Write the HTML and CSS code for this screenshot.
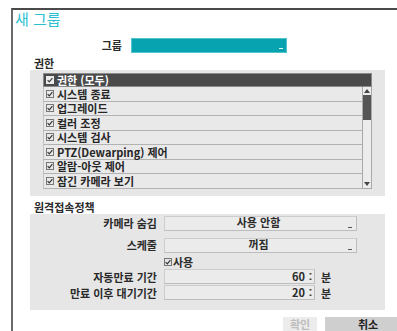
FILE: index.html
```html
<!DOCTYPE html>
<html lang="ko">
<head>
    <meta charset="UTF-8">
    <meta name="viewport" content="width=device-width, initial-scale=1.0">
    <title>새 그룹</title>
    <link rel="stylesheet" href="styles.css">
</head>
<body>

    <div class="dialog">
        <div class="title">새 그룹</div>

        <div class="group-row">
            <span class="group-label">그룹</span>
            <div class="group-input"><span class="mark"></span></div>
        </div>

        <!-- 권한 -->
        <div class="section-label">권한</div>
        <div class="panel perm-panel">
            <div class="perm-head">
                <svg class="chk" width="8" height="8" viewBox="0 0 8 8"><rect x="0.5" y="0.5" width="7" height="7" fill="#ececec" stroke="#ececec"/><path d="M1.6 4.1 L3.3 5.8 L6.4 2.2" fill="none" stroke="#444" stroke-width="1.3"/></svg>
                <span>권한 (모두)</span>
            </div>
            <div class="perm-body">
                <div class="perm-rows">
                    <div class="perm-row"><svg class="chk" width="8" height="8" viewBox="0 0 8 8"><rect x="0.5" y="0.5" width="7" height="7" fill="none" stroke="#777"/><path d="M1.6 4.1 L3.3 5.8 L6.4 2.2" fill="none" stroke="#333" stroke-width="1.2"/></svg>시스템 종료</div>
                    <div class="perm-row"><svg class="chk" width="8" height="8" viewBox="0 0 8 8"><rect x="0.5" y="0.5" width="7" height="7" fill="none" stroke="#777"/><path d="M1.6 4.1 L3.3 5.8 L6.4 2.2" fill="none" stroke="#333" stroke-width="1.2"/></svg>업그레이드</div>
                    <div class="perm-row"><svg class="chk" width="8" height="8" viewBox="0 0 8 8"><rect x="0.5" y="0.5" width="7" height="7" fill="none" stroke="#777"/><path d="M1.6 4.1 L3.3 5.8 L6.4 2.2" fill="none" stroke="#333" stroke-width="1.2"/></svg>컬러 조정</div>
                    <div class="perm-row"><svg class="chk" width="8" height="8" viewBox="0 0 8 8"><rect x="0.5" y="0.5" width="7" height="7" fill="none" stroke="#777"/><path d="M1.6 4.1 L3.3 5.8 L6.4 2.2" fill="none" stroke="#333" stroke-width="1.2"/></svg>시스템 검사</div>
                    <div class="perm-row"><svg class="chk" width="8" height="8" viewBox="0 0 8 8"><rect x="0.5" y="0.5" width="7" height="7" fill="none" stroke="#777"/><path d="M1.6 4.1 L3.3 5.8 L6.4 2.2" fill="none" stroke="#333" stroke-width="1.2"/></svg>PTZ(Dewarping) 제어</div>
                    <div class="perm-row"><svg class="chk" width="8" height="8" viewBox="0 0 8 8"><rect x="0.5" y="0.5" width="7" height="7" fill="none" stroke="#777"/><path d="M1.6 4.1 L3.3 5.8 L6.4 2.2" fill="none" stroke="#333" stroke-width="1.2"/></svg>알람-아웃 제어</div>
                    <div class="perm-row"><svg class="chk" width="8" height="8" viewBox="0 0 8 8"><rect x="0.5" y="0.5" width="7" height="7" fill="none" stroke="#777"/><path d="M1.6 4.1 L3.3 5.8 L6.4 2.2" fill="none" stroke="#333" stroke-width="1.2"/></svg>잠긴 카메라 보기</div>
                </div>
                <div class="scrollbar">
                    <div class="scroll-btn"><svg width="6" height="4" viewBox="0 0 6 4"><path d="M0 4 L3 0 L6 4 Z" fill="#444"/></svg></div>
                    <div class="scroll-thumb"></div>
                    <div class="scroll-space"></div>
                    <div class="scroll-btn"><svg width="6" height="4" viewBox="0 0 6 4"><path d="M0 0 L6 0 L3 4 Z" fill="#444"/></svg></div>
                </div>
            </div>
        </div>

        <!-- 원격접속정책 -->
        <div class="section-label">원격접속정책</div>
        <div class="panel remote-panel">
            <div class="form-row">
                <span class="form-label">카메라 숨김</span>
                <div class="select-box"><span class="select-text">사용 안함</span><span class="mark dark"></span></div>
            </div>
            <div class="form-row">
                <span class="form-label">스케줄</span>
                <div class="select-box"><span class="select-text">꺼짐</span><span class="mark dark"></span></div>
            </div>
            <div class="check-row">
                <svg class="chk" width="8" height="8" viewBox="0 0 8 8"><rect x="0.5" y="0.5" width="7" height="7" fill="none" stroke="#777"/><path d="M1.6 4.1 L3.3 5.8 L6.4 2.2" fill="none" stroke="#333" stroke-width="1.2"/></svg>
                <span>사용</span>
            </div>
            <div class="form-row tight">
                <span class="form-label">자동만료 기간</span>
                <div class="num-box"><span class="num-text">60</span><svg class="spin" width="3" height="9" viewBox="0 0 3 9"><rect x="0.5" y="1" width="2" height="1.5" fill="#444"/><rect x="0.5" y="6.5" width="2" height="1.5" fill="#444"/></svg></div>
                <span class="unit">분</span>
            </div>
            <div class="form-row tight">
                <span class="form-label">만료 이후 대기기간</span>
                <div class="num-box"><span class="num-text">20</span><svg class="spin" width="3" height="9" viewBox="0 0 3 9"><rect x="0.5" y="1" width="2" height="1.5" fill="#444"/><rect x="0.5" y="6.5" width="2" height="1.5" fill="#444"/></svg></div>
                <span class="unit">분</span>
            </div>
        </div>

        <div class="button-row">
            <button class="btn btn-ok" disabled>확인</button>
            <button class="btn btn-cancel">취소</button>
        </div>
    </div>

</body>
</html>
```

FILE: styles.css
```css
html, body {
    margin: 0;
    padding: 0;
    background: #ffffff;
    overflow: hidden;
}

body {
    font-family: "Noto Sans CJK KR", "Noto Sans", sans-serif;
    font-size: 11px;
    color: #2a2a2a;
}

/* 대화상자 틀 */
.dialog {
    margin-left: 11px;
    margin-top: 8px;
    width: 420px;
    height: 340px;
    border-top: 2px solid #4a4a4a;
    border-left: 2px solid #6a6a6a;
    box-sizing: border-box;
}

.title {
    padding-left: 2px;
    font-size: 15px;
    line-height: 18px;
    color: #2cc0d2;
}

.group-row {
    display: flex;
    align-items: center;
    gap: 9px;
    margin-top: 9px;
}

.group-label {
    width: 109px;
    text-align: right;
    font-weight: bold;
}

.group-input {
    display: flex;
    justify-content: flex-end;
    align-items: flex-end;
    width: 156px;
    height: 15px;
    box-sizing: border-box;
    padding: 0 3px 3px 0;
    background: #07a3b1;
    border: 1px solid #4fc4ce;
}

.mark {
    width: 4px;
    height: 1px;
    background: #e8f6f8;
}

.mark.dark {
    background: #555;
}

.section-label {
    margin-left: 21px;
    margin-top: 3px;
    line-height: 14px;
    font-weight: bold;
}

.panel {
    margin-left: 17px;
    width: 355px;
    background: #e6e6e6;
    box-sizing: border-box;
}

/* 권한 목록 */
.perm-panel {
    padding: 3px 13px 7px 13px;
}

.perm-panel + .section-label {
    margin-top: 4px;
}

.chk {
    flex: none;
    margin-right: 3px;
}

.perm-head {
    display: flex;
    align-items: center;
    height: 14px;
    box-sizing: border-box;
    padding-left: 2px;
    background: #4a4a4a;
    border: 1px solid #8a8a8a;
    color: #ffffff;
    font-weight: bold;
    line-height: 12px;
    overflow: hidden;
}

.perm-body {
    display: flex;
}

.perm-rows {
    flex: 1;
}

.perm-row {
    display: flex;
    align-items: center;
    height: 14.5px;
    box-sizing: border-box;
    padding-left: 2px;
    background: #e9e9e9;
    border-bottom: 1px solid #b2b2b2;
    border-left: 1px solid #c4c4c4;
    font-weight: bold;
    line-height: 12px;
    color: #262626;
}

.scrollbar {
    display: flex;
    flex-direction: column;
    width: 10px;
    box-sizing: border-box;
    background: #ececec;
    border: 1px solid #a9a9a9;
    border-top: none;
}

.scroll-btn {
    display: flex;
    justify-content: center;
    align-items: center;
    height: 8px;
}

.scroll-thumb {
    height: 25px;
    background: #555555;
}

.scroll-space {
    flex: 1;
}

/* 원격접속정책 */
.remote-panel {
    padding: 2px 0 9px 0;
}

.form-row {
    display: flex;
    align-items: center;
    gap: 7px;
    margin-bottom: 7px;
}

.form-row.tight {
    margin-bottom: 0;
}

.form-label {
    width: 127px;
    text-align: right;
    font-weight: bold;
    line-height: 14px;
}

.select-box {
    display: flex;
    align-items: flex-end;
    width: 193px;
    height: 15px;
    box-sizing: border-box;
    padding: 0 4px 2px 0;
    background: #ebebeb;
    border: 1px solid #cdcdcd;
    border-right-color: #bdbdbd;
    border-bottom-color: #bdbdbd;
}

.select-text {
    flex: 1;
    align-self: center;
    text-align: center;
    font-weight: bold;
    line-height: 13px;
    padding-left: 4px;
}

.check-row {
    display: flex;
    align-items: flex-end;
    height: 15px;
    margin-top: -6px;
    padding-left: 134px;
    font-weight: bold;
    line-height: 13px;
}

.check-row .chk {
    margin-right: 1px;
    margin-bottom: 3px;
}

.num-box {
    display: flex;
    align-items: center;
    justify-content: flex-end;
    gap: 4px;
    width: 151px;
    height: 15px;
    box-sizing: border-box;
    padding-right: 2px;
    background: #ebebeb;
    border: 1px solid #cdcdcd;
    border-right-color: #bdbdbd;
    border-bottom-color: #bdbdbd;
}

.num-text {
    font-weight: bold;
    line-height: 13px;
}

.unit {
    margin-left: -1px;
    font-weight: bold;
}

/* 버튼 */
.button-row {
    display: flex;
    gap: 8px;
    margin-top: 7px;
    padding-left: 270px;
}

.btn {
    height: 14px;
    padding: 0;
    border: none;
    font-family: "Noto Sans CJK KR", "Noto Sans", sans-serif;
    font-size: 11px;
    font-weight: bold;
    line-height: 14px;
}

.btn-ok {
    width: 34px;
    background: #ececec;
    color: #bdbdbd;
}

.btn-cancel {
    width: 86px;
    background: #cfcfcf;
    color: #222;
}
```
